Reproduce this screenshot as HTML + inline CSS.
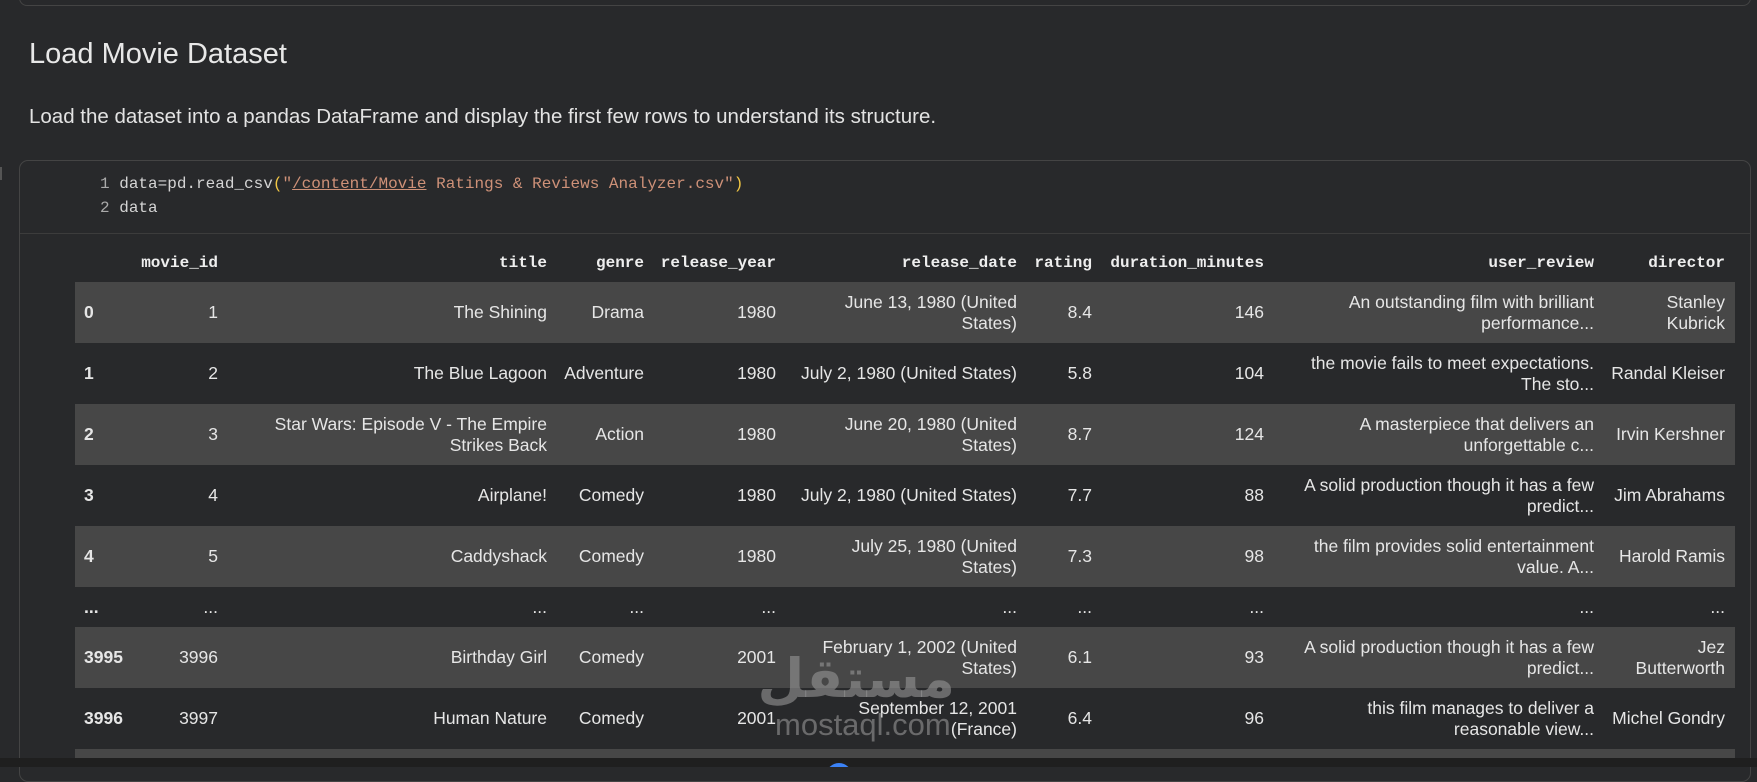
<!DOCTYPE html>
<html><head><meta charset="utf-8"><style>
body{margin:0;width:1757px;height:767px;background:#28292b;overflow:hidden;position:relative;font-family:"Liberation Sans",sans-serif;color:#e3e3e3}
.topbox{position:absolute;left:19px;top:-20px;width:1730px;height:24px;border:1px solid #444;border-radius:8px}
h1{position:absolute;left:29px;top:38px;margin:0;font-weight:400;font-size:29px;color:#e8e8e8}
p{position:absolute;left:29px;top:105px;margin:0;font-size:20.5px;color:#e3e3e3}
.cell{position:absolute;left:19px;top:160px;width:1730px;height:620px;border:1px solid #444;border-radius:9px}
.mark{position:absolute;left:0;top:167px;width:2px;height:13px;background:#555}
.code{position:absolute;left:100px;top:172px;font-family:"Liberation Mono",monospace;font-size:16px;line-height:24px;color:#d4d4d4;white-space:pre}
.ln{color:#aaa}
.s{color:#ce9178}.y{color:#f2c744}
.sep{position:absolute;left:20px;top:233px;width:1730px;height:1px;background:#3c3c3c}
.clip{position:absolute;left:0;top:0;width:1757px;height:758px;overflow:hidden}
table{position:absolute;left:75px;top:244px;border-collapse:collapse;table-layout:fixed;width:1660px;font-size:17.5px}
th{font-family:"Liberation Mono",monospace;font-weight:700;font-size:16px;text-align:right;height:38px;padding:0;color:#eee}
td{text-align:right;padding:0;height:61px;line-height:21px;color:#e6e6e6}
tr.g td{background:#474747}
tr.e td{height:40px}
td:first-child{text-align:left;padding-left:9px;font-weight:700}
td.t{padding-left:56px}td.d{padding-left:21px}td.u{padding-left:38px}td.r{padding-left:13px}
.bot{position:absolute;left:0;top:758px;width:1757px;height:9px;background:#1f1f1f;overflow:hidden}
.dot{position:absolute;left:826px;top:5px;width:26px;height:26px;border-radius:50%;background:#3b82f6}
.wm{position:absolute;left:775px;top:648px;color:rgba(150,150,150,.6);font-family:"DejaVu Sans",sans-serif;font-weight:700}
</style></head><body>
<div class="topbox"></div>
<h1>Load Movie Dataset</h1>
<p>Load the dataset into a pandas DataFrame and display the first few rows to understand its structure.</p>
<div class="mark"></div>
<div class="cell"></div>
<div class="code"><span class="ln">1</span> data=pd.read_csv<span class="y">(</span><span class="s">"<u>/content/Movie</u> Ratings &amp; Reviews Analyzer.csv"</span><span class="y">)</span>
<span class="ln">2</span> data</div>
<div class="sep"></div>
<div class="clip">
<table>
<colgroup><col style="width:55px"><col style="width:88px"><col style="width:329px"><col style="width:97px"><col style="width:132px"><col style="width:241px"><col style="width:75px"><col style="width:172px"><col style="width:330px"><col style="width:131px"><col style="width:10px"></colgroup>
<tr><th></th><th>movie_id</th><th>title</th><th>genre</th><th>release_year</th><th>release_date</th><th>rating</th><th>duration_minutes</th><th>user_review</th><th>director</th><th></th></tr>
<tr class="g"><td>0</td><td>1</td><td class="t">The Shining</td><td>Drama</td><td>1980</td><td class="d">June 13, 1980 (United States)</td><td>8.4</td><td>146</td><td class="u">An outstanding film with brilliant performance...</td><td class="r">Stanley Kubrick</td><td></td></tr>
<tr><td>1</td><td>2</td><td class="t">The Blue Lagoon</td><td>Adventure</td><td>1980</td><td class="d">July 2, 1980 (United States)</td><td>5.8</td><td>104</td><td class="u">the movie fails to meet expectations. The sto...</td><td class="r">Randal Kleiser</td><td></td></tr>
<tr class="g"><td>2</td><td>3</td><td class="t">Star Wars: Episode V - The Empire Strikes Back</td><td>Action</td><td>1980</td><td class="d">June 20, 1980 (United States)</td><td>8.7</td><td>124</td><td class="u">A masterpiece that delivers an unforgettable c...</td><td class="r">Irvin Kershner</td><td></td></tr>
<tr><td>3</td><td>4</td><td class="t">Airplane!</td><td>Comedy</td><td>1980</td><td class="d">July 2, 1980 (United States)</td><td>7.7</td><td>88</td><td class="u">A solid production though it has a few predict...</td><td class="r">Jim Abrahams</td><td></td></tr>
<tr class="g"><td>4</td><td>5</td><td class="t">Caddyshack</td><td>Comedy</td><td>1980</td><td class="d">July 25, 1980 (United States)</td><td>7.3</td><td>98</td><td class="u">the film provides solid entertainment value. A...</td><td class="r">Harold Ramis</td><td></td></tr>
<tr class="e"><td>...</td><td>...</td><td>...</td><td>...</td><td>...</td><td>...</td><td>...</td><td>...</td><td>...</td><td>...</td><td></td></tr>
<tr class="g"><td>3995</td><td>3996</td><td class="t">Birthday Girl</td><td>Comedy</td><td>2001</td><td class="d">February 1, 2002 (United States)</td><td>6.1</td><td>93</td><td class="u">A solid production though it has a few predict...</td><td class="r">Jez Butterworth</td><td></td></tr>
<tr><td>3996</td><td>3997</td><td class="t">Human Nature</td><td>Comedy</td><td>2001</td><td class="d">September 12, 2001 (France)</td><td>6.4</td><td>96</td><td class="u">this film manages to deliver a reasonable view...</td><td class="r">Michel Gondry</td><td></td></tr>
<tr class="g"><td></td><td></td><td></td><td></td><td></td><td></td><td></td><td></td><td></td><td></td><td></td></tr>
</table>
</div>
<div class="wm"><div style="font-size:54px;line-height:62px;direction:rtl;text-align:center;width:180px">مستقل</div><div style="font-size:31px;font-family:'Liberation Sans',sans-serif;line-height:30px;font-weight:400">mostaql.com</div></div>
<div class="bot"><div class="dot"></div></div>
</body></html>
